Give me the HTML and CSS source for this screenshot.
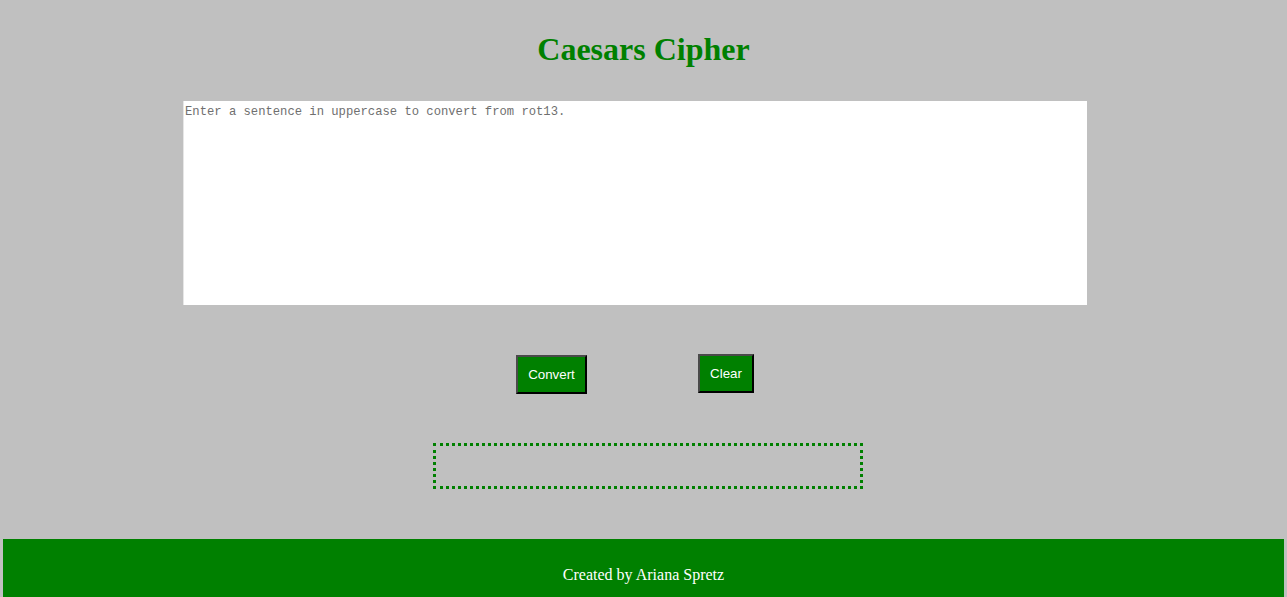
FILE: index.html
```html
<!DOCTYPE html>
<html lang="en">
<head>
<meta charset="utf-8">
<title>Caesars Cipher</title>
<link rel="stylesheet" href="styles.css">
</head>
<body>
<header class="top">
  <h1 class="title">Caesars Cipher</h1>
</header>
<main class="cipher">
  <textarea class="input" placeholder="Enter a sentence in uppercase to convert from rot13."></textarea>
  <div class="actions">
    <button class="btn btn-convert" type="button">Convert</button>
    <button class="btn btn-clear" type="button">Clear</button>
  </div>
  <div class="output"></div>
</main>
<footer class="footer">
  <p class="credit">Created by Ariana Spretz</p>
</footer>
</body>
</html>
```

FILE: styles.css
```css
html, body {
  margin: 0;
  padding: 0;
}
body {
  background: #c0c0c0;
  font-family: "Liberation Serif", "Times New Roman", serif;
}
.top {
  padding-top: 31px;
  text-align: center;
}
.title {
  margin: 0;
  font-size: 32px;
  font-weight: bold;
  color: #008000;
  line-height: normal;
}
.cipher {
  display: flex;
  flex-direction: column;
  align-items: center;
  padding-top: 33px;
}
.input {
  box-sizing: border-box;
  width: 904px;
  height: 204px;
  margin-right: 17px;
  padding: 3px 2px 2px 1px;
  border: none;
  border-left: 1px solid #e6e6e6;
  background: #fff;
  resize: none;
  font-family: "Liberation Mono", "Courier New", monospace;
  font-size: 12.2px;
  line-height: 17px;
  color: #000;
  outline: none;
}
.input::placeholder {
  color: #6f6f6f;
}
.actions {
  display: flex;
  align-items: flex-start;
  gap: 111px;
  margin-top: 49px;
  margin-right: 17px;
}
.btn {
  box-sizing: border-box;
  height: 39px;
  padding: 0;
  border-style: solid;
  border-width: 2px;
  border-color: #4a4a4a #000 #000 #4a4a4a;
  background: #008000;
  color: #fff;
  font-family: "Liberation Sans", Arial, sans-serif;
  font-size: 13.33px;
  cursor: pointer;
}
.btn-convert {
  width: 71px;
  margin-top: 1px;
}
.btn-clear {
  width: 56px;
}
.output {
  box-sizing: border-box;
  width: 430px;
  height: 46px;
  margin-top: 49px;
  margin-left: 9px;
  border: 3px dotted #008000;
}
.footer {
  margin: 50px 3px 0;
  background: #008000;
  height: 80px;
  padding-top: 27px;
  box-sizing: border-box;
  text-align: center;
}
.credit {
  margin: 0;
  color: #fff;
  font-size: 16px;
}
```
